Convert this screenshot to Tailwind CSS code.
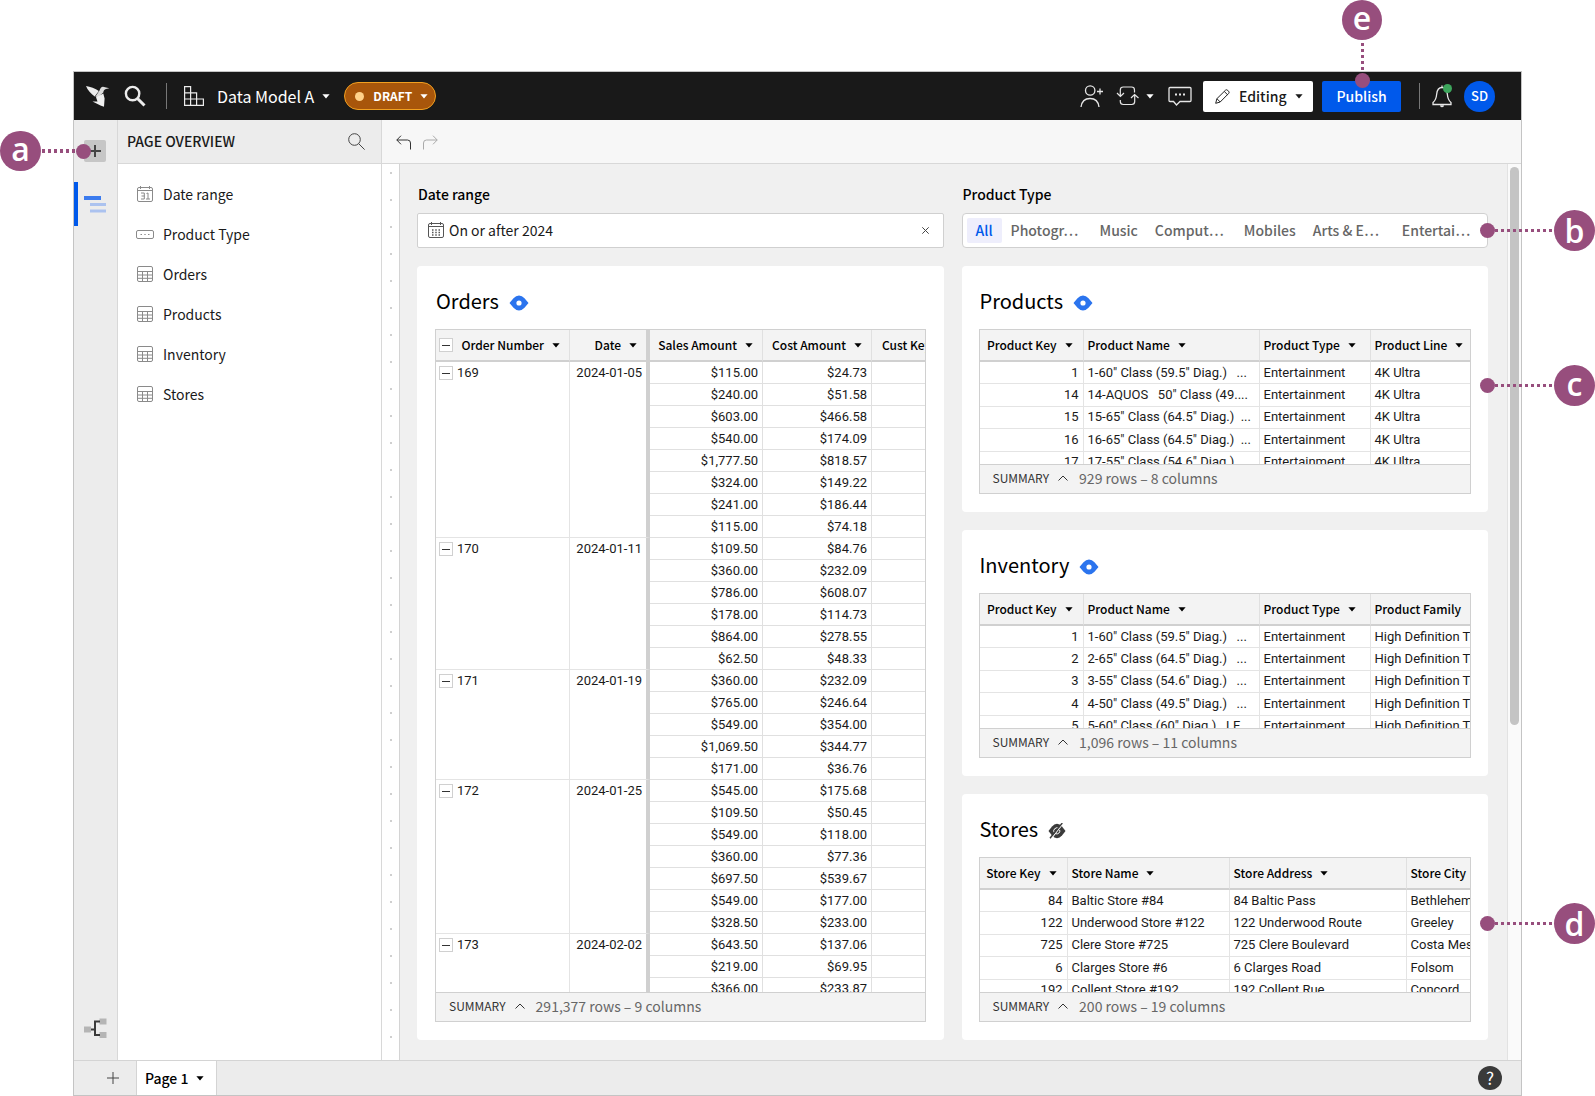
<!DOCTYPE html>
<html lang="en">
<head>
<meta charset="utf-8">
<meta name="viewport" content="width=device-width, initial-scale=1">
<title>Data Model A</title>
<script src="https://cdn.jsdelivr.net/npm/@tailwindcss/browser@4"></script>
</head>
<body class="relative flex h-screen flex-col overflow-hidden bg-white px-[73px] pt-[71px] font-['Noto_Sans_CJK_SC','Open_Sans',sans-serif] text-[14px] leading-5 text-[#1a1a1a]">

<svg class="hidden" aria-hidden="true">
  <symbol id="caret" viewBox="0 0 8 5"><path d="M.4.3h7.200L4 4.500z" fill="currentColor"/></symbol>
  <symbol id="chev-up" viewBox="0 0 12 12"><path d="M1.500 8.500 6 4l4.500 4.500" fill="none" stroke="currentColor"/></symbol>
  <symbol id="grid" viewBox="0 0 16 16"><g fill="none" stroke="#8a8a8a"><rect x=".5" y=".5" width="15" height="15" rx="1.500"/><path d="M.5 5.500h15M.5 9h15M.5 12.300h15M5.500 5.500v10M10.500 5.500v10"/></g></symbol>
  <symbol id="eye" viewBox="0 0 20 16"><path fill-rule="evenodd" d="M.5 8 4.500 3.200Q7 .5 10 .5t5.500 2.700L19.500 8l-4 4.800Q13 15.500 10 15.500t-5.500-2.700zM10 5.400a2.600 2.600 0 1 0 0 5.200 2.600 2.600 0 0 0 0-5.200z" fill="currentColor"/></symbol>
  <symbol id="eye-off" viewBox="0 0 18 16"><path d="M.5 8 4 3.400Q6.300.8 9 .8t5 2.600L17.500 8 14 12.600q-2.300 2.600-5 2.600t-5-2.600z" fill="#3b3b3b"/><path d="M11 5.800A3 3 0 0 0 6.600 10M7.500 10.600A3 3 0 0 0 11.700 7" fill="none" stroke="#fff"/><path d="M15.500 0 3 16" stroke="#fff" stroke-width="1.200"/><path d="M14.300 0 2 15.300" stroke="#3b3b3b" stroke-width="1.400"/></symbol>
</svg>

<div class="flex min-h-0 flex-1 flex-col border border-[#c4c4c4] bg-white">
  <header class="flex h-12 shrink-0 items-center bg-[#191919] text-white">
    <svg class="ml-3 h-6 w-6" viewBox="0 0 24 24"><path d="M0 2C4 3 9.500 4.200 12.800 7L8.700 12.400C5 9.500 1.500 6.500 0 2z" fill="#ececec"/><path d="M13.500 6.500C14.300 4 15.300 2.700 17 2.700l6.300 1.600-3.300.6c-1.700.6-2.500 1.800-2.700 3.600l-5 4.600-3-.4z" fill="#dcdcdc"/><path d="m10 13.300 7.300-3.800 1.300 5L18 22.700l-3.500-1.200L6.500 17.400l5 .2z" fill="#f0f0f0"/></svg>
    <button class="ml-[14px]" aria-label="Search"><svg class="h-[22px] w-[22px]" viewBox="0 0 22 22" fill="none" stroke="#ececec"><circle cx="8.600" cy="8.600" r="6.700" stroke-width="2.400"/><path d="m13.500 13.500 7 7" stroke-width="3"/></svg></button>
    <span class="ml-5 h-[26px] w-px bg-[#777]"></span>
    <svg class="ml-[17px] h-5 w-5" viewBox="0 0 20 20" fill="none" stroke="#ececec" stroke-width="1.200"><path d="M.6.6h6v18.800h-6zM.6 6.800h12v12.600M.6 13h18.800v6.400H.6"/></svg>
    <button class="ml-[13px] flex items-center text-[16px]">Data Model A<svg class="ml-[8px] h-[5px] w-2"><use href="#caret"/></svg></button>
    <button class="ml-[14px] flex h-7 w-[92px] items-center rounded-full border border-[#f2a020] bg-[#a8560b] pl-[10px] text-[12px] font-bold"><span class="mr-[9px] h-[9px] w-[9px] rounded-full bg-[#ffd28a]"></span>DRAFT<svg class="ml-2 h-[5px] w-2"><use href="#caret"/></svg></button>

    <div class="ml-auto mr-[26px] flex items-center">
      <button aria-label="Share"><svg class="h-6 w-6" viewBox="0 0 24 24" fill="none" stroke="#e6e6e6" stroke-width="1.300"><circle cx="10.200" cy="6.500" r="4.700"/><path d="M1 23c.8-6 4.300-8.500 9-8.500s8.300 2.500 9 8.500M20 4.500v6M17 7.500h6"/></svg></button>
      <button class="ml-3 flex items-center" aria-label="Refresh"><svg class="h-6 w-6" viewBox="0 0 24 24" fill="none" stroke="#e6e6e6" stroke-width="1.200"><path d="M18.500 8.500V6q0-3-3-3H7.300q-3 0-3 3v6M1 9l3.400 3.400L8 9M4.300 16v1.500q0 3 3 3h8.400q3 0 3-3V11M15 14l3.600-3.500L22.500 14"/></svg><svg class="ml-[6px] h-[5px] w-2"><use href="#caret"/></svg></button>
      <button class="ml-[14px]" aria-label="Comments"><svg class="h-5 w-6" viewBox="0 0 24 20" fill="none" stroke="#e6e6e6" stroke-width="1.300"><path d="M2 1.500h20q1 0 1 1v12q0 1-1 1H12l-3.500 3.500L5.500 15.500H2q-1 0-1-1v-12q0-1 1-1z"/><path d="M7 8.500h2M11 8.500h2M15 8.500h2" stroke-width="2"/></svg></button>
      <button class="ml-[11px] flex h-[31px] w-[110px] items-center rounded-xs bg-white pl-3 text-[14px] font-medium text-[#191919]"><svg class="mr-[9px] h-[15px] w-[15px]" viewBox="0 0 15 15" fill="none" stroke="#222"><path d="m.7 14.300 1.200-4.600L10.500 1.200q1-1 2.300.2l.7.700q1.200 1.300.2 2.300L5.200 13zM9.300 2.500l3.200 3.200M1.900 9.700 5.200 13"/></svg>Editing<svg class="ml-2 h-[5px] w-2"><use href="#caret"/></svg></button>
      <button class="ml-[9px] h-[31px] w-[79px] rounded-xs bg-[#0059eb] text-[14px] font-medium">Publish</button>
      <span class="ml-[18px] h-[26px] w-px bg-[#777]"></span>
      <button class="relative ml-[12px]" aria-label="Notifications"><svg class="h-[23px] w-5" viewBox="0 0 20 23" fill="none" stroke="#e8e8e8" stroke-width="1.300"><path d="M10 2.500C6 2.500 5 6 4.700 9 4.300 13.500 3.500 15.500 1 17.500v2h18v-2c-2.500-2-3.300-4-3.700-8.500C15 6 14 2.500 10 2.500zM10 .5v2M8.500 20.500q1.500 2 3 0"/></svg><span class="absolute -top-px left-[11px] h-[9px] w-[9px] rounded-full bg-[#3da65c]"></span></button>
      <button class="ml-3 h-[31px] w-[31px] rounded-full bg-[#0059eb] text-[13px] font-medium">SD</button>
    </div>
  </header>

  <div class="flex min-h-0 flex-1">
    <nav class="flex w-11 shrink-0 flex-col border-r border-[#d8d8d8] bg-[#ececec]" aria-label="Tools">
      <button class="ml-[10px] mt-5 flex h-[22px] w-[22px] items-center justify-center rounded-xs bg-[#c6c6c6]" aria-label="Add element"><svg class="h-3 w-3" viewBox="0 0 12 12"><path d="M6 0v12M0 6h12" stroke="#444" stroke-width="2"/></svg></button>
      <button class="mt-5 flex h-11 w-full items-center border-l-4 border-[#0059eb] pl-[6px]" aria-label="Page overview"><svg class="h-[17px] w-[22px]" viewBox="0 0 22 17"><path d="M0 0h17v4H0z" fill="#3b7bee"/><path d="M6 7h16v3H6zM6 13.500h16v3H6z" fill="#abc2ef"/></svg></button>
      <button class="mb-5 ml-[10px] mt-auto" aria-label="Lineage"><svg class="h-[22px] w-[23px]" viewBox="0 0 23 22"><path d="M0 8.500h7v6H0zM15.500.5h7v6h-7zM15.500 14h7v6h-7z" fill="#b5b5b5"/><path d="M7 11.500h4M16 3.500h-5v13.500h5" fill="none" stroke="#3a3a3a" stroke-width="2"/></svg></button>
    </nav>

    <aside class="flex w-[264px] shrink-0 flex-col border-r border-[#d8d8d8]">
      <div class="flex h-11 items-center border-b border-[#d8d8d8] bg-[#ececec] pb-px pl-[9px] pr-4">
        <h2 class="text-[14px] font-medium">PAGE OVERVIEW</h2>
        <button class="ml-auto" aria-label="Search page"><svg class="h-[17px] w-[17px]" viewBox="0 0 17 17" fill="none" stroke="#444"><circle cx="6.500" cy="6.500" r="5.800"/><path d="m10.600 10.600 6 6"/></svg></button>
      </div>
      <ul class="flex flex-col gap-5 pl-[19px] pt-5">
        <li class="flex items-center gap-[10px]"><svg class="h-4 w-4" viewBox="0 0 16 16" fill="none" stroke="#8a8a8a"><rect x=".5" y="1.500" width="15" height="14" rx="1.500"/><path d="M.5 4.500h15M3.500 0v3M12.500 0v3M4 7h3.300v6H4M4.500 10h3M9.500 7.500 11 7v6M9 13h4"/></svg><a href="#date">Date range</a></li>
        <li class="flex items-center gap-[9px]"><svg class="-ml-px h-[9px] w-[18px]" viewBox="0 0 18 9" fill="none" stroke="#8a8a8a"><rect x=".5" y=".5" width="17" height="8" rx="1.500"/><path d="M4.500 4.500H6M8.300 4.500h1.400M12 4.500h1.500"/></svg><a href="#type">Product Type</a></li>
        <li class="flex items-center gap-[10px]"><svg class="h-4 w-4"><use href="#grid"/></svg><a href="#orders">Orders</a></li>
        <li class="flex items-center gap-[10px]"><svg class="h-4 w-4"><use href="#grid"/></svg><a href="#products">Products</a></li>
        <li class="flex items-center gap-[10px]"><svg class="h-4 w-4"><use href="#grid"/></svg><a href="#inventory">Inventory</a></li>
        <li class="flex items-center gap-[10px]"><svg class="h-4 w-4"><use href="#grid"/></svg><a href="#stores">Stores</a></li>
      </ul>
    </aside>

    <div class="flex min-w-0 flex-1 flex-col">
      <div class="flex h-11 shrink-0 items-center gap-3 border-b border-[#d8d8d8] bg-[#f7f7f7] pl-[14px] pt-[2px]">
        <button aria-label="Undo"><svg class="h-[15px] w-[15px]" viewBox="0 0 15 15" fill="none" stroke="#333"><path d="M5 .7.800 5 5 9.300M.8 5h10.700q3 0 3 3v6.500"/></svg></button>
        <button aria-label="Redo"><svg class="h-[15px] w-[15px]" viewBox="0 0 15 15" fill="none" stroke="#aaa"><path d="M10 .7 14.200 5 10 9.300M14.200 5H3.500q-3 0-3 3v6.500"/></svg></button>
      </div>

      <div class="flex min-h-0 flex-1">
        <div class="w-[18px] shrink-0 border-r border-[#d4d4d4] bg-[radial-gradient(circle_at_9px_9px,#cfcfcf_1px,transparent_1px)] bg-[length:18px_27px]"></div>

        <main class="grid min-w-0 flex-1 grid-cols-2 grid-rows-[auto_minmax(0,1fr)] gap-x-[18px] gap-y-[18px] bg-[#f0f0f0] pb-5 pl-[17px] pr-[19px] pt-5">
          <div class="flex flex-col gap-[9px]" id="date">
            <label class="pl-px font-medium text-black" for="date-input">Date range</label>
            <div class="flex h-[35px] items-center rounded-xs border border-[#d0d0d0] bg-white pb-px pl-[10px] pr-[14px]">
              <svg class="mr-[5px] h-4 w-4 shrink-0" viewBox="0 0 16 16" fill="none" stroke="#555"><rect x=".5" y="1.500" width="15" height="14" rx="1.500"/><path d="M.5 4.500h15M3.500 0v3M12.500 0v3"/><path d="M4 8h8M4 10.500h8M4 13h8" stroke-width="1.300" stroke-dasharray="1.500 1.750"/></svg>
              <input id="date-input" class="min-w-0 flex-1 outline-none" value="On or after 2024">
              <button aria-label="Clear"><svg class="h-[7px] w-[7px]" viewBox="0 0 7 7"><path d="m.3.3 6.400 6.400M6.700.3.300 6.700" stroke="#444"/></svg></button>
            </div>
          </div>
          <div class="flex min-w-0 flex-col gap-[9px]" id="type">
            <span class="pl-px font-medium text-black" id="type-label">Product Type</span>
            <div role="group" aria-labelledby="type-label" class="flex h-[35px] items-center overflow-hidden whitespace-nowrap rounded-sm border border-[#d0d0d0] bg-white pb-px pl-1 text-left font-medium text-[#666]">
              <button class="h-[25px] rounded-xs bg-[#eeeefc] px-[9px] text-[#0059eb]">All</button>
              <button class="w-[89px] pl-[9px] text-left">Photogr…</button>
              <button class="pl-[9px] pr-2 text-left">Music</button>
              <button class="w-[89px] pl-[9px] text-left">Comput…</button>
              <button class="pl-[9px] pr-2 text-left">Mobiles</button>
              <button class="w-[89px] pl-[9px] text-left">Arts &amp; E…</button>
              <button class="w-[89px] pl-[9px] text-left">Entertai…</button>
            </div>
          </div>

          <section id="orders" class="flex min-h-0 min-w-0 flex-col rounded bg-white px-[18px] pb-[18px] pt-[22px]"></section>
          <div class="flex min-h-0 min-w-0 flex-col gap-[18px]">
            <section id="products" class="flex min-h-0 flex-1 flex-col rounded bg-white px-[17px] pb-[18px] pt-[22px]"></section>
            <section id="inventory" class="flex min-h-0 flex-1 flex-col rounded bg-white px-[17px] pb-[18px] pt-[22px]"></section>
            <section id="stores" class="flex min-h-0 flex-1 flex-col rounded bg-white px-[17px] pb-[18px] pt-[22px]"></section>
          </div>
        </main>

        <div class="w-[14px] shrink-0 border-l border-[#e2e2e2] bg-[#fafafa] pl-[2px] pt-[3px]"><div class="h-[558px] w-[9px] rounded-full bg-[#c4c4c4]"></div></div>
      </div>
    </div>
  </div>

  <footer class="flex h-[35px] shrink-0 items-stretch border-t border-[#d4d4d4] bg-[#ececec]">
    <button class="ml-[33px]" aria-label="Add page"><svg class="h-3 w-3" viewBox="0 0 12 12"><path d="M6 0v12M0 6h12" stroke="#444"/></svg></button>
    <button class="ml-[17px] flex w-[81px] items-center border-x border-[#d4d4d4] bg-white pl-2 font-medium text-black">Page 1<svg class="ml-2 h-[5px] w-2"><use href="#caret"/></svg></button>
    <button class="ml-auto mr-[19px] h-6 w-6 self-center rounded-full bg-[#3a3a3a] text-[17px] text-white" aria-label="Help">?</button>
  </footer>
</div>

<!-- callouts -->
<div class="absolute left-0 top-[131px] flex items-center font-['Open_Sans',sans-serif] text-[32px] font-semibold text-white">
  <span class="flex h-10 w-[41px] items-center justify-center rounded-full bg-[#974e7d] pb-1">a</span>
  <span class="ml-px h-1 w-[34px] bg-[repeating-linear-gradient(90deg,#974e7d_0_3px,transparent_3px_6px)]"></span>
  <span class="h-[15px] w-[15px] rounded-full bg-[#974e7d]"></span>
</div>
<div class="absolute right-0 top-[210px] flex items-center font-['Open_Sans',sans-serif] text-[32px] font-semibold text-white">
  <span class="h-[15px] w-[15px] rounded-full bg-[#974e7d]"></span>
  <span class="h-[3px] w-[59px] bg-[repeating-linear-gradient(90deg,#974e7d_0_3px,transparent_3px_6px)]"></span>
  <span class="flex h-[41px] w-[41px] items-center justify-center rounded-full bg-[#974e7d]">b</span>
</div>
<div class="absolute right-0 top-[365px] flex items-center font-['Open_Sans',sans-serif] text-[32px] font-semibold text-white">
  <span class="h-[15px] w-[15px] rounded-full bg-[#974e7d]"></span>
  <span class="h-[3px] w-[59px] bg-[repeating-linear-gradient(90deg,#974e7d_0_3px,transparent_3px_6px)]"></span>
  <span class="flex h-[41px] w-[41px] items-center justify-center rounded-full bg-[#974e7d] pb-1">c</span>
</div>
<div class="absolute right-0 top-[903px] flex items-center font-['Open_Sans',sans-serif] text-[32px] font-semibold text-white">
  <span class="h-[15px] w-[15px] rounded-full bg-[#974e7d]"></span>
  <span class="h-[3px] w-[59px] bg-[repeating-linear-gradient(90deg,#974e7d_0_3px,transparent_3px_6px)]"></span>
  <span class="flex h-[41px] w-[41px] items-center justify-center rounded-full bg-[#974e7d]">d</span>
</div>
<div class="absolute right-[213px] top-0 flex flex-col items-center font-['Open_Sans',sans-serif] text-[32px] font-semibold text-white">
  <span class="flex h-10 w-10 items-center justify-center rounded-full bg-[#974e7d] pb-1">e</span>
  <span class="mt-[3px] h-[30px] w-[3px] bg-[repeating-linear-gradient(180deg,#974e7d_0_3px,transparent_3px_6px)]"></span>
  <span class="h-[15px] w-[15px] rounded-full bg-[#974e7d]"></span>
</div>

<script>
const caret = '<svg class="h-[5px] w-2 shrink-0"><use href="#caret"/></svg>';
const minus = '<button class="flex h-[14px] w-[14px] shrink-0 items-center justify-center border border-[#d0d0d0] bg-white" aria-label="Collapse"><span class="h-px w-2 bg-[#333]"></span></button>';

function card(id, title, hidden, summary, table) {
  const eye = hidden
    ? '<svg class="h-4 w-[18px]"><use href="#eye-off"/></svg>'
    : '<svg class="h-4 w-5 text-[#2b74ee]"><use href="#eye"/></svg>';
  document.getElementById(id).innerHTML =
    `<div class="mb-[15px] flex h-[26px] shrink-0 items-center gap-[10px] pl-px"><h2 class="text-[20px] leading-[26px] text-black">${title}</h2><span class="pt-[3px]">${eye}</span></div>
     <div class="flex min-h-0 flex-1 flex-col overflow-hidden border border-[#d0d0d0]">
       <div class="min-h-0 flex-1 overflow-hidden">${table}</div>
       <div class="flex h-[29px] shrink-0 items-center border-t border-[#d0d0d0] bg-[#f3f3f3] pb-[2px] pl-[13px]">
         <button class="flex items-center text-[12px] text-[#333]">SUMMARY<svg class="ml-2 h-3 w-3"><use href="#chev-up"/></svg></button>
         <span class="ml-[10px] text-[14px] text-[#666]">${summary}</span>
       </div>
     </div>`;
}

function simple(cols, rows) {
  const group = cols.map(c => c.w ? `<col style="width:${c.w}px">` : '<col>').join('');
  const head = cols.map((c, i) => `<th class="h-8 overflow-hidden border-b-2 border-r border-b-[#d0d0d0] border-r-[#e0e0e0] bg-[#f3f3f3] p-0 font-medium last:border-r-0"><div class="flex items-center whitespace-nowrap ${i === 0 ? 'justify-end gap-2 pr-[10px]' : 'gap-2 pl-1'}">${c.t}${c.nocaret ? '' : caret}</div></th>`).join('');
  const body = rows.map(r => '<tr>' + r.map((v, i) => `<td class="h-[22px] overflow-hidden whitespace-pre border-b border-r border-[#e4e4e4] p-0 last:border-r-0 ${i === 0 ? 'pr-1 text-right' : 'pl-1'}">${v}</td>`).join('') + '</tr>').join('');
  return `<table class="h-[144px] w-full table-fixed border-separate border-spacing-0 font-[Roboto,sans-serif] text-[13px] leading-5"><colgroup>${group}</colgroup><thead class="font-['Noto_Sans_CJK_SC',sans-serif] text-[12px] text-black"><tr>${head}</tr></thead><tbody>${body}</tbody></table>`;
}

const orders = [
  ['169', '2024-01-05', [['$115.00','$24.73'],['$240.00','$51.58'],['$603.00','$466.58'],['$540.00','$174.09'],['$1,777.50','$818.57'],['$324.00','$149.22'],['$241.00','$186.44'],['$115.00','$74.18']]],
  ['170', '2024-01-11', [['$109.50','$84.76'],['$360.00','$232.09'],['$786.00','$608.07'],['$178.00','$114.73'],['$864.00','$278.55'],['$62.50','$48.33']]],
  ['171', '2024-01-19', [['$360.00','$232.09'],['$765.00','$246.64'],['$549.00','$354.00'],['$1,069.50','$344.77'],['$171.00','$36.76']]],
  ['172', '2024-01-25', [['$545.00','$175.68'],['$109.50','$50.45'],['$549.00','$118.00'],['$360.00','$77.36'],['$697.50','$539.67'],['$549.00','$177.00'],['$328.50','$233.00']]],
  ['173', '2024-02-02', [['$643.50','$137.06'],['$219.00','$69.95'],['$366.00','$233.87']]]
];
const ordersBody = orders.map(([n, d, rows]) => rows.map((r, i) => '<tr>' +
  (i === 0 ? `<td rowspan="${rows.length}" class="border-b border-r border-[#e4e4e4] p-0 pl-[3px] pt-px align-top"><div class="flex items-center gap-1">${minus}${n}</div></td><td rowspan="${rows.length}" class="border-b border-r-4 border-b-[#e4e4e4] border-r-[#d0d0d0] p-0 pr-1 pt-px text-right align-top">${d}</td>` : '') +
  r.map(v => `<td class="h-[22px] border-b border-r border-[#e0e0e0] p-0 pr-1 text-right">${v}</td>`).join('') +
  '<td class="border-b border-[#e0e0e0] p-0"></td></tr>').join('')).join('');
const th = 'h-8 overflow-hidden whitespace-nowrap border-b-2 border-b-[#d0d0d0] bg-[#f3f3f3] p-0 font-medium';
const ordersTable = `<table class="w-full table-fixed border-separate border-spacing-0 font-[Roboto,sans-serif] text-[13px] leading-5">
  <colgroup><col class="w-[134px]"><col class="w-[80px]"><col class="w-[113px]"><col class="w-[109px]"><col></colgroup>
  <thead class="font-['Noto_Sans_CJK_SC',sans-serif] text-[12px] text-black"><tr>
    <th class="${th} border-r border-r-[#e0e0e0]"><div class="flex items-center gap-2 pl-[3px] pr-[9px]">${minus}<span class="ml-auto">Order Number</span>${caret}</div></th>
    <th class="${th} border-r-4 border-r-[#d0d0d0]"><div class="flex items-center justify-end gap-2 pr-[9px]">Date${caret}</div></th>
    <th class="${th} border-r border-r-[#e0e0e0]"><div class="flex items-center justify-end gap-2 pr-[9px]">Sales Amount${caret}</div></th>
    <th class="${th} border-r border-r-[#e0e0e0]"><div class="flex items-center justify-end gap-2 pr-[9px]">Cost Amount${caret}</div></th>
    <th class="${th}"><div class="pl-[10px] text-left">Cust Key</div></th>
  </tr></thead><tbody>${ordersBody}</tbody></table>`;
card('orders', 'Orders', false, '291,377 rows – 9 columns', ordersTable);

const E = 'Entertainment', K = '4K Ultra', H = 'High Definition TVs';
card('products', 'Products', false, '929 rows – 8 columns', simple(
  [{t:'Product Key',w:104},{t:'Product Name',w:176},{t:'Product Type',w:111},{t:'Product Line'}],
  [['1','1-60" Class (59.5" Diag.)   ...',E,K],['14','14-AQUOS   50" Class (49....',E,K],['15','15-65" Class (64.5" Diag.)  ...',E,K],['16','16-65" Class (64.5" Diag.)  ...',E,K],['17','17-55" Class (54.6" Diag.)  ...',E,K]]));
card('inventory', 'Inventory', false, '1,096 rows – 11 columns', simple(
  [{t:'Product Key',w:104},{t:'Product Name',w:176},{t:'Product Type',w:111},{t:'Product Family',nocaret:true}],
  [['1','1-60" Class (59.5" Diag.)   ...',E,H],['2','2-65" Class (64.5" Diag.)   ...',E,H],['3','3-55" Class (54.6" Diag.)   ...',E,H],['4','4-50" Class (49.5" Diag.)   ...',E,H],['5','5-60" Class (60" Diag.)   LE...',E,H]]));
card('stores', 'Stores', true, '200 rows – 19 columns', simple(
  [{t:'Store Key',w:88},{t:'Store Name',w:162},{t:'Store Address',w:177},{t:'Store City',nocaret:true}],
  [['84','Baltic Store #84','84 Baltic Pass','Bethlehem'],['122','Underwood Store #122','122 Underwood Route','Greeley'],['725','Clere Store #725','725 Clere Boulevard','Costa Mesa'],['6','Clarges Store #6','6 Clarges Road','Folsom'],['192','Collent Store #192','192 Collent Rue','Concord']]));
</script>
</body>
</html>
